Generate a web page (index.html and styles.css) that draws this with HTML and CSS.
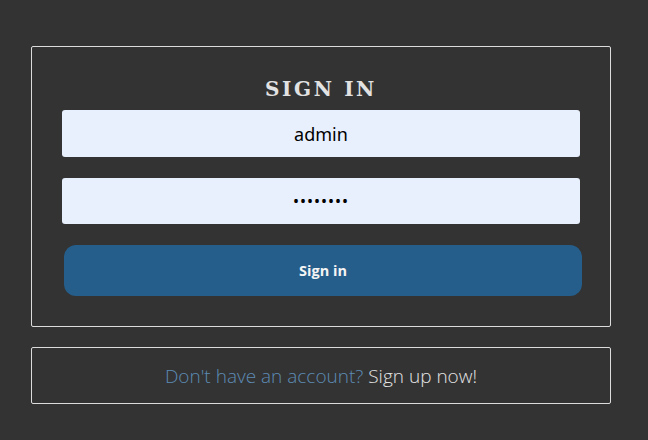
FILE: index.html
```html
<!DOCTYPE html>
<html>
<head>
<meta charset="utf-8">
<link rel="stylesheet" href="styles.css">
</head>
<body>
<div class="page">
  <form class="card login">
    <h1 class="title">SIGN IN</h1>
    <input class="field" type="text" value="admin">
    <input class="field pass" type="password" value="password">
    <button class="btn" type="button">Sign in</button>
  </form>
  <div class="card signup">
    <p class="signup-text"><span class="muted">Don't have an account?</span> <a class="link">Sign up now!</a></p>
  </div>
</div>
</body>
</html>
```
FILE: styles.css
```css
html, body {
  margin: 0;
  padding: 0;
  background: #333333;
  height: 100%;
}
.page {
  padding: 46px 0 0 31px;
  width: 580px;
  display: flex;
  flex-direction: column;
  gap: 20px;
}
.card {
  border: 1px solid #dcdcdc;
  border-radius: 2px;
  box-sizing: border-box;
  width: 580px;
}
.login {
  height: 281px;
  padding: 0 30px;
  display: flex;
  flex-direction: column;
  margin: 0;
}
.title {
  margin: 30px 0 0 0;
  height: 33px;
  font-family: "DejaVu Serif", serif;
  font-weight: 700;
  font-size: 20px;
  letter-spacing: 2.6px;
  color: #e2e2e2;
  text-align: center;
  line-height: 24px;
}
.field {
  display: block;
  box-sizing: border-box;
  width: 518px;
  height: 47px;
  border: none;
  border-radius: 3px;
  background: #e8f0fe;
  font-family: "Noto Sans", sans-serif;
  font-size: 18px;
  color: #000;
  text-align: center;
  padding: 0;
  outline: none;
}
.pass {
  margin-top: 21px;
  height: 46px;
  font-size: 16px;
  letter-spacing: 1px;
}
.btn {
  margin: 21px 0 0 2px;
  width: 518px;
  height: 51px;
  border: none;
  border-radius: 12px;
  background: #255e8b;
  color: #f4f4f4;
  font-family: "Open Sans", sans-serif;
  font-weight: 700;
  font-size: 14.5px;
  padding: 0;
}
.signup {
  height: 57px;
  display: flex;
  align-items: center;
  justify-content: center;
}
.signup-text {
  margin: 0;
  font-family: "Open Sans", sans-serif;
  font-weight: 300;
  font-size: 19px;
}
.muted {
  color: #5d8bb5;
}
.link {
  color: #e4e4e4;
}
```
